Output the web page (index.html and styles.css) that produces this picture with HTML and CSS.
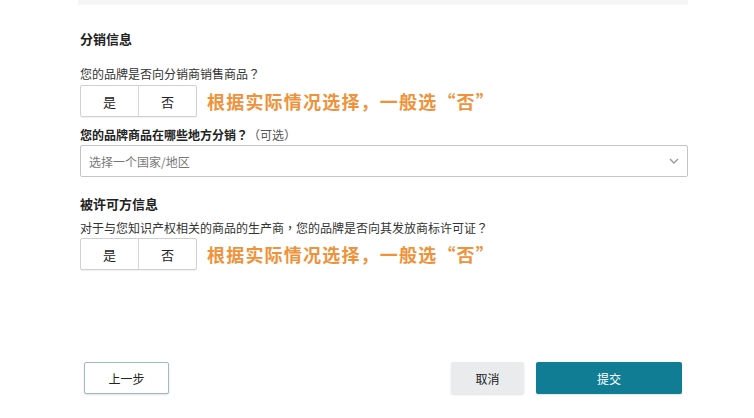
FILE: index.html
```html
<!DOCTYPE html>
<html lang="zh">
<head>
<meta charset="utf-8">
<link rel="stylesheet" href="styles.css">
</head>
<body>
<div class="topbar"></div>
<div class="form">
  <h2 class="section first">分销信息</h2>
  <p class="question q1">您的品牌是否向分销商销售商品<span class="punct" lang="zh-TW">？</span></p>
  <div class="choice-row">
    <div class="toggle">
      <span class="cell">是</span>
      <span class="cell">否</span>
    </div>
    <span class="note">根据实际情况选择，一般选“否”</span>
  </div>
  <p class="label"><b>您的品牌商品在哪些地方分销<span class="punct" lang="zh-TW">？</span></b><span class="optional" lang="zh-TW">（</span><span class="optional">可选</span><span class="optional" lang="zh-TW">）</span></p>
  <div class="select">
    <span class="placeholder">选择一个国家/地区</span>
    <svg class="chev" width="10" height="6" viewBox="0 0 10 6"><path d="M1 1 L5 5 L9 1" fill="none" stroke="#9a9a9a" stroke-width="1.4"/></svg>
  </div>
  <h2 class="section second">被许可方信息</h2>
  <p class="question q2">对于与您知识产权相关的商品的生产商<span class="punct" lang="zh-TW">，</span>您的品牌是否向其发放商标许可证<span class="punct" lang="zh-TW">？</span></p>
  <div class="choice-row r2">
    <div class="toggle">
      <span class="cell">是</span>
      <span class="cell">否</span>
    </div>
    <span class="note">根据实际情况选择，一般选“否”</span>
  </div>
  <div class="actions">
    <button class="btn prev">上一步</button>
    <div class="spacer"></div>
    <button class="btn cancel">取消</button>
    <button class="btn submit">提交</button>
  </div>
</div>
</body>
</html>
```

FILE: styles.css
```css
html, body {
  margin: 0;
  padding: 0;
  background: #ffffff;
}
body {
  width: 754px;
  height: 418px;
  overflow: hidden;
  font-family: "Noto Sans CJK SC", "Noto Sans", sans-serif;
  color: #333;
}
.topbar {
  margin-left: 78px;
  width: 610px;
  height: 5px;
  background: #f6f6f6;
}
.form {
  padding: 0 66px 0 80px;
}
.section {
  margin: 0;
  font-size: 13px;
  line-height: 18px;
  font-weight: bold;
  color: #222;
}
.section.first { margin-top: 25px; }
.section.second { margin-top: 18px; }
.question {
  margin: 0;
  font-size: 12px;
  line-height: 16px;
  color: #333;
}
.punct {
  font-family: "Noto Sans CJK TC", "Noto Sans CJK SC", sans-serif;
}
.q1 { margin-top: 18px; }
.q2 { margin-top: 7px; }
.choice-row {
  display: flex;
  align-items: center;
  margin-top: 3px;
}
.choice-row.r2 { margin-top: 2px; }
.toggle {
  display: flex;
  border: 1px solid #d0d0d0;
  border-radius: 2px;
  box-shadow: 0 1px 1px rgba(0,0,0,0.06);
}
.cell {
  width: 57px;
  height: 30px;
  display: flex;
  align-items: center;
  justify-content: center;
  font-size: 13px;
  color: #222;
}
.cell + .cell {
  border-left: 1px solid #d8d8d8;
}
.note {
  margin-left: 10px;
  font-size: 18px;
  font-weight: bold;
  color: #f0923a;
  letter-spacing: 1.2px;
}
.label {
  margin: 10px 0 0;
  font-size: 12px;
  line-height: 16px;
  color: #222;
}
.optional {
  font-family: "Noto Sans CJK TC", "Noto Sans CJK SC", sans-serif;
  font-weight: normal;
  color: #555;
}
.select {
  margin-top: 2px;
  height: 30px;
  border: 1px solid #c4c4c4;
  border-radius: 2px;
  display: flex;
  align-items: center;
  justify-content: space-between;
  padding: 0 8px 0 8px;
}
.placeholder {
  font-size: 12px;
  color: #777;
}
.chev {
  display: block;
}
.actions {
  display: flex;
  align-items: center;
  margin-top: 92px;
  padding: 0 6px 0 4px;
}
.spacer { flex: 1; }
.btn {
  font-family: "Noto Sans CJK SC", "Noto Sans", sans-serif;
  font-size: 12px;
  height: 32px;
  border-radius: 2px;
  padding: 0;
  cursor: pointer;
}
.prev {
  width: 85px;
  background: #fff;
  border: 1px solid #9cbcc2;
  color: #222;
  box-shadow: 0 1px 2px rgba(0,0,0,0.12);
}
.cancel {
  width: 73px;
  background: #e9ebed;
  border: none;
  color: #222;
  box-shadow: 0 1px 2px rgba(0,0,0,0.12);
}
.submit {
  width: 146px;
  margin-left: 12px;
  background: #117d94;
  border: none;
  color: #fff;
  box-shadow: 0 1px 2px rgba(0,0,0,0.12);
}
```
